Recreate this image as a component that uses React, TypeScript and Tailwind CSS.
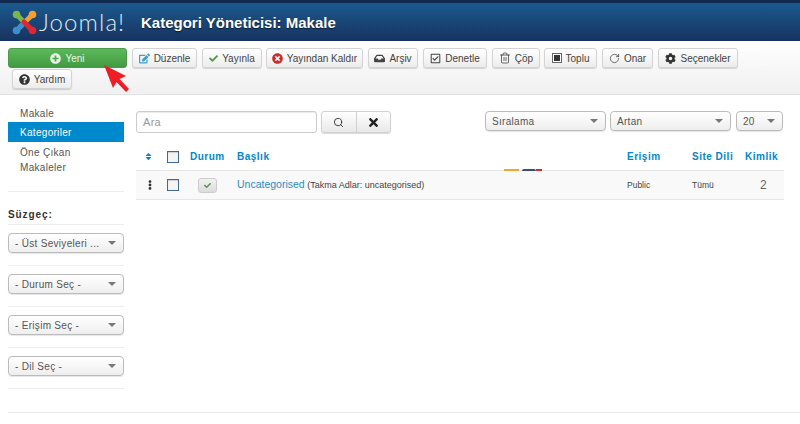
import { ReactNode } from "react";
import { RotateCw, Search, Trash2 } from "lucide-react";
import {
  FaCheck,
  FaCog,
  FaEdit,
  FaEllipsisV,
  FaInbox,
  FaPlusCircle,
  FaQuestionCircle,
  FaRegCheckSquare,
  FaSort,
  FaTimes,
  FaTimesCircle,
} from "react-icons/fa";

const FILTERS = ["- Üst Seviyeleri ...", "- Durum Seç -", "- Erişim Seç -", "- Dil Seç -"];

function ToolButton({ icon, label, className }: { icon: ReactNode; label: string; className: string }) {
  return (
    <button className={`flex h-[20px] items-center justify-center gap-[4px] whitespace-nowrap rounded-[3px] border border-[#d4d4d4] bg-gradient-to-b from-white to-[#ececec] text-[10px] text-[#444] shadow-[0_1px_1px_rgba(0,0,0,0.15)] ${className}`}>
      {icon}
      {label}
    </button>
  );
}

function Caret() {
  return <span className="h-0 w-0 border-x-[4px] border-t-[4px] border-x-transparent border-t-[#777]" />;
}

function Dropdown({ label, className }: { label: string; className: string }) {
  return (
    <div className={`flex items-center justify-between rounded-[4px] border border-[#bbb] bg-gradient-to-b from-white to-[#eee] pl-[6px] pr-[7px] text-[10px] tracking-[0.3px] text-[#555] shadow-[0_1px_1px_rgba(0,0,0,0.1)] ${className}`}>
      <span className="whitespace-nowrap">{label}</span>
      <Caret />
    </div>
  );
}

function Checkbox() {
  return <span className="block h-[12px] w-[12px] border border-[#3f6a94] bg-[#f4f4f4] shadow-[inset_0_1px_1px_rgba(0,0,0,0.15)]" />;
}

function JoomlaMark() {
  return (
    <svg width="25" height="25" viewBox="0 0 25 25" fill="none" strokeWidth="5" strokeLinecap="round">
      <path d="M5 5 L13 13" stroke="#7ab648" />
      <circle cx="4.5" cy="4.5" r="3.8" fill="#7ab648" />
      <path d="M20 5 L8 17" stroke="#f5a02a" />
      <circle cx="20.5" cy="4.5" r="3.8" fill="#f5a02a" />
      <path d="M5 20 L12 13" stroke="#3e8ecb" />
      <circle cx="4.5" cy="20.5" r="3.8" fill="#3e8ecb" />
      <path d="M12 12 L20 20" stroke="#e4242f" />
      <circle cx="20.5" cy="20.5" r="3.8" fill="#e4242f" />
    </svg>
  );
}

export default function App() {
  return (
    <div className="relative h-[424px] w-[800px] overflow-hidden bg-white font-['Liberation_Sans',Arial,sans-serif]">
      <div className="h-[3px] bg-[#10294f]" />
      <header className="flex h-[38px] items-center bg-gradient-to-b from-[#1a5a8f] to-[#17335f] pl-[12px]">
        <JoomlaMark />
        <span className="ml-[2px] w-[90px] font-['Lato',sans-serif] text-[24px] leading-none font-light tracking-[1.1px] text-[#dfe7ef]">Joomla!</span>
        <h1 className="ml-[12px] pt-[2px] text-[15px] font-bold text-white [text-shadow:0_1px_1px_rgba(0,0,0,0.6)]">
          Kategori Yöneticisi: Makale
        </h1>
      </header>

      <div className="h-[54px] border-b border-[#e2e2e2] bg-gradient-to-b from-white to-[#f0f0f0] px-[8px] pt-[7px]">
        <div className="flex items-start gap-[4px]">
          <button className="flex h-[20px] w-[119px] items-center justify-center gap-[4px] rounded-[3px] border border-[#4a9a48] bg-gradient-to-b from-[#5cb85a] to-[#439b41] text-[10px] text-[#e8f5e8]">
            <FaPlusCircle className="text-[11px] text-[#e6f3e6]" />
            Yeni
          </button>
          <ToolButton className="ml-[1px] w-[65px]" label="Düzenle" icon={<FaEdit className="text-[11px] text-[#3d9fd0]" />} />
          <ToolButton className="ml-[1px] w-[60px]" label="Yayınla" icon={<FaCheck className="text-[9px] text-[#4c9a3f]" />} />
          <ToolButton className="w-[97px]" label="Yayından Kaldır" icon={<FaTimesCircle className="text-[11px] text-[#c9302c]" />} />
          <ToolButton className="ml-[1px] w-[50px]" label="Arşiv" icon={<FaInbox className="text-[11px] text-[#444]" />} />
          <ToolButton className="ml-[1px] w-[64px]" label="Denetle" icon={<FaRegCheckSquare className="text-[11px] text-[#444]" />} />
          <ToolButton className="ml-[1px] w-[48px]" label="Çöp" icon={<Trash2 size={12} strokeWidth={1.6} className="text-[#444]" />} />
          <ToolButton
            className="w-[53px]"
            label="Toplu"
            icon={
              <span className="flex h-[10px] w-[10px] items-center justify-center border border-[#666] bg-white">
                <span className="h-[6px] w-[6px] bg-[#333]" />
              </span>
            }
          />
          <ToolButton className="ml-[1px] w-[51px]" label="Onar" icon={<RotateCw size={11} strokeWidth={1.5} className="text-[#333]" />} />
          <ToolButton className="ml-[1px] w-[80px]" label="Seçenekler" icon={<FaCog className="text-[11px] text-[#333]" />} />
        </div>
        <ToolButton className="ml-[4px] mt-[1px] w-[60px]" label="Yardım" icon={<FaQuestionCircle className="text-[11px] text-[#333]" />} />
      </div>

      <div className="flex">
        <aside className="ml-[8px] w-[116px] shrink-0 pt-[9px] text-[10px] tracking-[0.3px] text-[#555]">
          <div className="flex h-[18px] items-center pl-[12px]">Makale</div>
          <div className="flex h-[20px] items-center bg-[#0088cc] pl-[12px] text-white">Kategoriler</div>
          <div className="pl-[12px] pt-[3px] leading-[15px]">
            Öne Çıkan
            <br />
            Makaleler
          </div>
          <div className="mt-[16px] border-t border-[#eee]" />
          <div className="flex h-[32px] items-end pb-[2px] font-bold tracking-[0.9px] text-[#333]">Süzgeç:</div>
          <div className="border-t border-[#eee]" />
          {FILTERS.map((filter) => (
            <div key={filter} className="border-b border-[#eee] pt-[8px] pb-[12px]">
              <Dropdown label={filter} className="h-[20px]" />
            </div>
          ))}
        </aside>

        <main className="ml-[12px] w-[648px] pt-[16px]">
          <div className="flex items-start">
            <div className="flex h-[22px] w-[181px] items-center rounded-[3px] border border-[#ccc] pl-[6px] text-[11px] tracking-[0.3px] text-[#999] shadow-[inset_0_1px_1px_rgba(0,0,0,0.08)]">
              Ara
            </div>
            <div className="ml-[4px] flex h-[22px] w-[70px] overflow-hidden rounded-[3px] border border-[#d0d0d0] bg-gradient-to-b from-white to-[#e8e8e8] shadow-[0_1px_1px_rgba(0,0,0,0.15)]">
              <span className="flex flex-1 items-center justify-center border-r border-[#d0d0d0]">
                <Search size={11} strokeWidth={2} className="text-[#333]" />
              </span>
              <span className="flex flex-1 items-center justify-center">
                <FaTimes className="text-[13px] text-[#222]" />
              </span>
            </div>
            <Dropdown label="Sıralama" className="ml-[94px] h-[20px] w-[121px]" />
            <Dropdown label="Artan" className="ml-[4px] h-[20px] w-[121px]" />
            <Dropdown label="20" className="ml-[5px] h-[20px] w-[47px]" />
          </div>

          <div className="mt-[11px] grid h-[26px] grid-cols-[31px_23px_47px_390px_65px_53px_39px] items-center pb-[1px] text-[10px] font-bold tracking-[0.5px] text-[#0088cc]">
            <FaSort className="ml-[8px] text-[9px]" />
            <Checkbox />
            <span>Durum</span>
            <span>Başlık</span>
            <span>Erişim</span>
            <span className="whitespace-nowrap">Site Dili</span>
            <span>Kimlik</span>
          </div>

          <div className="grid h-[30px] grid-cols-[31px_23px_47px_390px_65px_53px_39px] items-center border-y border-[#e6e6e6] bg-[#f9f9f9] text-[#444]">
            <FaEllipsisV className="ml-[9px] text-[10px] text-[#333]" />
            <Checkbox />
            <span className="ml-[8px] flex h-[15px] w-[19px] items-center justify-center rounded-[3px] border border-[#ccc] bg-gradient-to-b from-[#f2f2f2] to-[#dcdcdc]">
              <FaCheck className="text-[7px] text-[#4c9a3f]" />
            </span>
            <span className="whitespace-nowrap text-[9px]">
              <span className="text-[10.5px] text-[#2a8cc4]">Uncategorised</span> (Takma Adlar: uncategorised)
            </span>
            <span className="text-[8.5px]">Public</span>
            <span className="text-[8.5px]">Tümü</span>
            <span className="pl-[15px] text-[12px] text-[#666]">2</span>
          </div>
        </main>
      </div>

      <div className="absolute left-[8px] right-0 top-[412px] border-t border-[#e8e8e8]" />

      {/* piece of a logo showing behind the table row */}
      <div className="absolute left-[504px] top-[169px] h-[2px] w-[15px] bg-[#eda92c]" />
      <div className="absolute left-[522px] top-[169px] h-[2px] w-[14px] rounded-t-full bg-[#3a4d7a]" />
      <div className="absolute left-[536px] top-[169px] h-[2px] w-[6px] bg-[#c9302c]" />

      <svg className="absolute left-[102px] top-[63px]" width="30" height="30" viewBox="0 0 30 30">
        <path d="M2 2 L24 13 L17.5 16 L27 26 L24 29 L14.5 19 L11 25 Z" fill="#ee1c25" />
      </svg>
    </div>
  );
}
